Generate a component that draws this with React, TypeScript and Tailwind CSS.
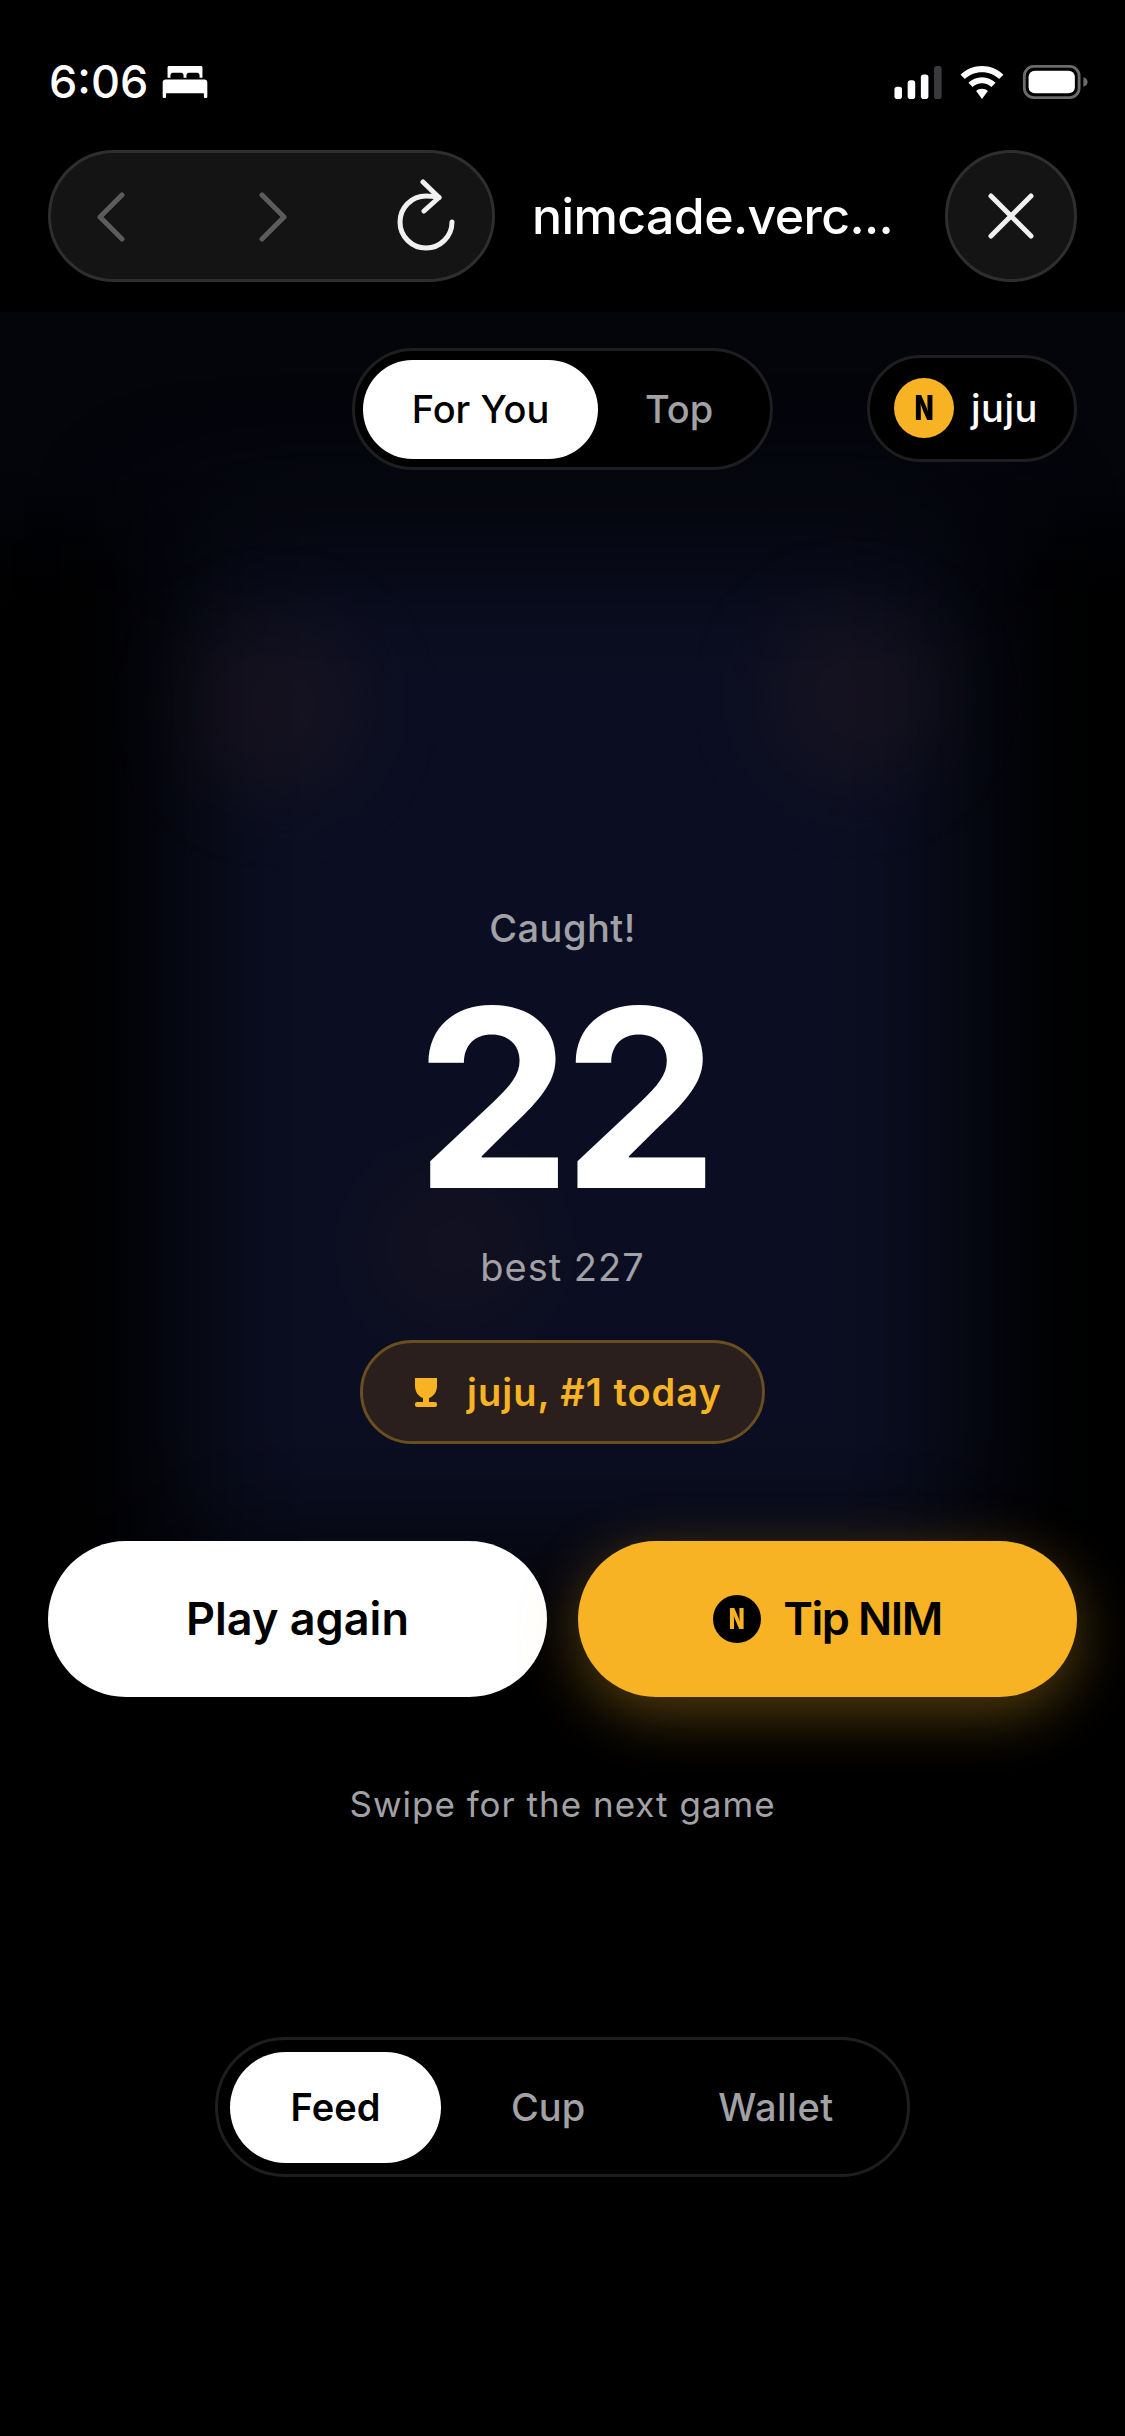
import type { ReactNode } from 'react';

const sans = "font-['Inter','Liberation_Sans',sans-serif]";

function NimCoin({ className, letterClassName }: { className: string; letterClassName: string }) {
  return (
    <span className={`flex shrink-0 items-center justify-center rounded-full ${className}`}>
      <span className={`inline-block scale-x-[0.72] font-black ${letterClassName}`}>N</span>
    </span>
  );
}

function StatusBar() {
  return (
    <div className="flex h-[150px] items-start justify-between pl-[49px] pr-[35px] pt-[60px]">
      <div className="flex items-center gap-[14px]">
        <span className="text-[45px] leading-[44px] font-medium text-white">6:06</span>
        <svg width="46" height="32" viewBox="0 0 46 33" fill="#fff">
          <path d="M5 1.500C5 .7 5.700 0 6.500 0h33c.8 0 1.500.7 1.500 1.500V12h-3V9.500C38 8 37 7 35.500 7H27c-1.500 0-2.500 1-2.500 2.500V12h-3V9.500C21.500 8 20.500 7 19 7h-8.500C9 7 8 8 8 9.500V12H5z" />
          <path d="M3 14h40c1.700 0 3 1.300 3 3v11H0V17c0-1.700 1.300-3 3-3z" />
          <rect x="0" y="27" width="3.500" height="6" rx="1" />
          <rect x="42.500" y="27" width="3.500" height="6" rx="1" />
        </svg>
      </div>
      <div className="flex items-center gap-[15px] pt-[5px]">
        <svg width="51" height="33" viewBox="0 0 51 35">
          <rect x="0" y="22" width="8" height="13" rx="3" fill="#fff" />
          <rect x="14" y="15" width="8" height="20" rx="3" fill="#fff" />
          <rect x="28" y="9" width="8" height="26" rx="3" fill="#fff" />
          <rect x="42" y="0" width="8" height="35" rx="3" fill="#3a3a3c" />
        </svg>
        <svg width="46" height="33" viewBox="0 0 46 35" fill="#fff" className="mr-[1px]">
          <path d="M23 0c8.800 0 16.800 3.500 22.700 9.200l-4.500 4.700C36.500 9.400 30.100 6.600 23 6.600S9.500 9.400 4.800 13.900L.3 9.200C6.200 3.500 14.200 0 23 0z" />
          <path d="M23 12c5.600 0 10.600 2.200 14.400 5.700L33 22.400c-2.600-2.500-6.100-4-10-4s-7.400 1.500-10 4l-4.400-4.700C12.400 14.200 17.400 12 23 12z" />
          <path d="M23 24c2.400 0 4.600.9 6.200 2.500L23 35l-6.200-8.500C18.400 24.900 20.600 24 23 24z" />
        </svg>
        <svg width="69" height="34" viewBox="0 0 69 36">
          <rect x="1.500" y="1.500" width="58" height="33" rx="10" fill="none" stroke="#6b6b6e" strokeWidth="3" />
          <rect x="6" y="6" width="49" height="24" rx="6.500" fill="#fff" />
          <path d="M64 13c2.800.6 4.500 2.700 4.500 5s-1.700 4.400-4.500 5z" fill="#6b6b6e" />
        </svg>
      </div>
    </div>
  );
}

function BrowserBar() {
  return (
    <div className="flex h-[132px] items-center pl-[48px] pr-[48px]">
      <div className="flex h-[132px] w-[447px] items-center justify-between rounded-full border-[3px] border-[#2e2e2e] bg-[#141414] pl-[46px] pr-[37px]">
        <svg width="28" height="50" viewBox="0 0 28 50" fill="none" stroke="#5c5c5c" strokeWidth="5" strokeLinecap="round" strokeLinejoin="round" className="mt-[2px]">
          <path d="M25 3 3 25l22 22" />
        </svg>
        <svg width="28" height="50" viewBox="0 0 28 50" fill="none" stroke="#5c5c5c" strokeWidth="5" strokeLinecap="round" strokeLinejoin="round" className="ml-[24px] mt-[2px]">
          <path d="m3 3 22 22L3 47" />
        </svg>
        <svg width="58" height="72" viewBox="0 0 58 72" fill="none" stroke="#f0f0f0" strokeWidth="5" strokeLinecap="round" strokeLinejoin="round" className="mt-[-2px]">
          <path d="M55 43a26 26 0 1 1-26-26c3.500 0 8 .4 13 1.500" />
          <path d="M26 3l16 15.500L27 32" />
        </svg>
      </div>
      <span className="ml-[37px] w-[376px] text-[50px] leading-[60px] font-medium tracking-[-0.6px] whitespace-nowrap text-white">
        nimcade.verc...
      </span>
      <div className="ml-auto flex h-[132px] w-[132px] items-center justify-center rounded-full border-[3px] border-[#2e2e2e] bg-[#141414]">
        <svg width="46" height="46" viewBox="0 0 46 46" fill="none" stroke="#f0f0f0" strokeWidth="5" strokeLinecap="round">
          <path d="M3 3l40 40M43 3 3 43" />
        </svg>
      </div>
    </div>
  );
}

function Backdrop() {
  return (
    <div className="pointer-events-none absolute inset-0 overflow-hidden">
      <div className="absolute left-0 top-0 h-[300px] w-full bg-[linear-gradient(to_bottom,#04050b,#04050b_50%,transparent)]" />
      <div className="absolute left-[180px] top-[230px] h-[1020px] w-[790px] bg-[#0b0e22] blur-[70px]" />
      <div className="absolute left-[190px] top-[310px] h-[170px] w-[170px] rounded-full bg-[#2a1c1e] opacity-35 blur-[40px]" />
      <div className="absolute left-[770px] top-[300px] h-[170px] w-[170px] rounded-full bg-[#2a1c1e] opacity-35 blur-[40px]" />
      <div className="absolute left-[370px] top-[860px] h-[150px] w-[170px] rounded-full bg-[#2a1c1e] opacity-25 blur-[40px]" />
    </div>
  );
}

function PillButton({ className, children }: { className: string; children: ReactNode }) {
  return (
    <div className={`flex h-[156px] flex-1 items-center justify-center rounded-full text-[45px] font-semibold text-black ${className}`}>
      {children}
    </div>
  );
}

export default function App() {
  return (
    <div className={`flex h-[2436px] w-[1125px] flex-col overflow-hidden bg-black ${sans}`}>
      <StatusBar />
      <BrowserBar />

      <div className="relative mt-[30px] flex-1">
        <Backdrop />

        <div className="relative flex flex-col">
          <div className="grid grid-cols-[1fr_auto_1fr] items-center px-[48px] pt-[36px]">
            <div />
            <div className="flex h-[122px] w-[421px] items-center rounded-full border-[3px] border-[#1e1e20] bg-black pl-[8px]">
              <div className="flex h-[99px] w-[235px] items-center justify-center rounded-full bg-white text-[38px] font-medium text-black">
                For You
              </div>
              <span className="ml-[47px] text-[38px] font-medium text-[#a1a1a6]">Top</span>
            </div>
            <div className="mb-[2px] flex h-[107px] w-[210px] items-center gap-[17px] justify-self-end rounded-full border-[3px] border-[#1e1e20] bg-black pl-[24px]">
              <NimCoin className="h-[60px] w-[60px] bg-[#f7b324]" letterClassName="text-[34px] leading-none text-black" />
              <span className="text-[38px] leading-none font-medium tracking-[0.5px] text-white">juju</span>
            </div>
          </div>

          <div className="flex flex-col items-center">
            <p className="mt-[428px] text-[38px] leading-[60px] font-medium tracking-[0.5px] text-[#a1a1a6]">Caught!</p>
            <p className="mt-[25px] h-[230px] text-[248px] leading-[230px] font-bold tracking-[-9px] text-white">22</p>
            <p className="mt-[29px] text-[38px] leading-[50px] font-normal tracking-[1px] text-[#a1a1a6]">best 227</p>
            <div className="mt-[48px] flex h-[104px] w-[405px] items-center gap-[30px] rounded-full border-[3px] border-[#6b4e1f] bg-[#2a1f1c] pl-[52px]">
              <svg width="22" height="29" viewBox="0 0 22 29" fill="#f7b324">
                <path d="M0 0h22v8c0 6-4 11-8 12v4H8v-4C4 19 0 14 0 8z" />
                <rect x="0" y="24" width="22" height="5" rx="2" />
              </svg>
              <span className="text-[38px] leading-none font-semibold tracking-[1px] text-[#f7b324]">juju, #1 today</span>
            </div>
          </div>

          <div className="mt-[97px] flex gap-[31px] px-[48px]">
            <PillButton className="bg-white">Play again</PillButton>
            <PillButton className="gap-[22px] bg-[#f7b324] shadow-[0_16px_60px_rgba(247,179,36,0.35)]">
              <NimCoin className="h-[48px] w-[48px] bg-black" letterClassName="text-[28px] leading-none text-[#f7b324]" />
              <span className="tracking-[-1.5px]">Tip NIM</span>
            </PillButton>
          </div>

          <p className="mt-[83px] text-center text-[35px] leading-[48px] tracking-[1px] text-[#a1a1a6]">Swipe for the next game</p>

          <div className="mt-[209px] flex justify-center">
            <div className="flex h-[140px] w-[695px] items-center rounded-full border-[3px] border-[#1e1e20] pl-[12px]">
              <div className="flex h-[111px] w-[211px] items-center justify-center rounded-full bg-white text-[38px] font-semibold text-black">
                Feed
              </div>
              <span className="ml-[70px] text-[38px] font-medium text-[#a1a1a6]">Cup</span>
              <span className="ml-[133px] text-[38px] font-medium tracking-[0.6px] text-[#a1a1a6]">Wallet</span>
            </div>
          </div>
        </div>
      </div>
    </div>
  );
}
